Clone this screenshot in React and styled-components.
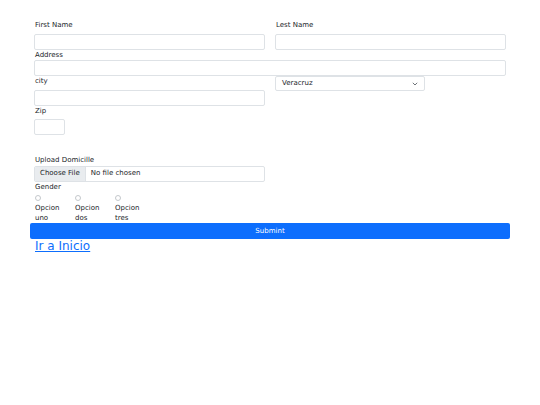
import React from 'react';
import styled, { createGlobalStyle } from 'styled-components';

const GlobalStyle = createGlobalStyle`
  * { box-sizing: border-box; }
  body {
    margin: 0;
    background: #ffffff;
    font-family: "DejaVu Sans", "Noto Sans", sans-serif;
    font-size: 7px;
    line-height: 10.5px;
    color: #212529;
  }
`;

const Container = styled.form`
  width: 480px;
  margin: 0 auto;
  padding-top: 20px;
`;

const Row = styled.div`
  display: flex;
  padding: 0 4px;
  gap: 10px;
`;

const Col = styled.div`
  width: ${(p) => p.$w || '231px'};
  display: flex;
  flex-direction: column;
`;

const Label = styled.label`
  display: block;
  margin-bottom: ${(p) => p.$mb || '0'};
  margin-top: ${(p) => p.$mt || '0'};
  padding-left: 1px;
`;

const Input = styled.input`
  display: block;
  width: ${(p) => p.$w || '100%'};
  height: 16px;
  border: 1px solid #dee2e6;
  border-radius: 2px;
  background: #fff;
  font: inherit;
  padding: 0 6px;
  margin: 0;
  outline: none;
`;

const SelectBox = styled.div`
  width: 150px;
  height: 15px;
  border: 1px solid #dee2e6;
  border-radius: 2px;
  display: flex;
  align-items: center;
  justify-content: space-between;
  padding: 0 6px;
`;

const FileBox = styled.div`
  width: 231px;
  height: 16px;
  border: 1px solid #dee2e6;
  border-radius: 2px;
  display: flex;
  align-items: stretch;
  overflow: hidden;
`;

const FileButton = styled.span`
  background: #e9ecef;
  border-right: 1px solid #dee2e6;
  padding: 0 5px;
  display: flex;
  align-items: center;
`;

const FileText = styled.span`
  padding: 0 5px;
  display: flex;
  align-items: center;
`;

const Radios = styled.div`
  display: flex;
  padding: 0 4px;
`;

const RadioItem = styled.div`
  width: 40px;
  padding-left: 1px;
  display: flex;
  flex-direction: column;
  line-height: 10px;
`;

const RadioDot = styled.span`
  display: block;
  width: 6px;
  height: 6px;
  border: 1px solid #c4c8cc;
  border-radius: 50%;
  margin: 3px 0 2px 0;
`;

const Submit = styled.button`
  display: block;
  width: 480px;
  height: 16px;
  border: none;
  border-radius: 2px;
  background: #0d6efd;
  color: #fff;
  font: inherit;
  padding: 0;
`;

const Link = styled.a`
  display: inline-block;
  margin-left: 5px;
  font-size: 12px;
  line-height: 15px;
  color: #0d6efd;
  text-decoration: underline;
`;

const Chevron = () => (
  <svg width="6" height="4" viewBox="0 0 6 4">
    <path d="M0.8 0.8 L3 3 L5.2 0.8" fill="none" stroke="#495057" strokeWidth="0.8" />
  </svg>
);

const App = () => {
  return (
    <>
      <GlobalStyle />
      <Container onSubmit={(e) => e.preventDefault()}>
        <Row>
          <Col>
            <Label $mb="3px">First Name</Label>
            <Input />
          </Col>
          <Col>
            <Label $mb="3px">Lest Name</Label>
            <Input />
          </Col>
        </Row>
        <Row>
          <Col $w="472px">
            <Label>Address</Label>
            <Input />
          </Col>
        </Row>
        <Row>
          <Col>
            <Label $mb="3px">city</Label>
            <Input />
          </Col>
          <Col>
            <SelectBox>
              <span>Veracruz</span>
              <Chevron />
            </SelectBox>
          </Col>
        </Row>
        <Row>
          <Col>
            <Label $mb="3px">Zip</Label>
            <Input $w="31px" />
          </Col>
        </Row>
        <Row>
          <Col>
            <Label $mt="20px">Upload Domicille</Label>
            <FileBox>
              <FileButton>Choose File</FileButton>
              <FileText>No file chosen</FileText>
            </FileBox>
            <Label>Gender</Label>
          </Col>
        </Row>
        <Radios>
          {['uno', 'dos', 'tres'].map((n) => (
            <RadioItem key={n}>
              <RadioDot />
              <span>Opcion</span>
              <span>{n}</span>
            </RadioItem>
          ))}
        </Radios>
        <Submit type="submit">Submint</Submit>
        <Link href="#">Ir a Inicio</Link>
      </Container>
    </>
  );
};

export default App;
